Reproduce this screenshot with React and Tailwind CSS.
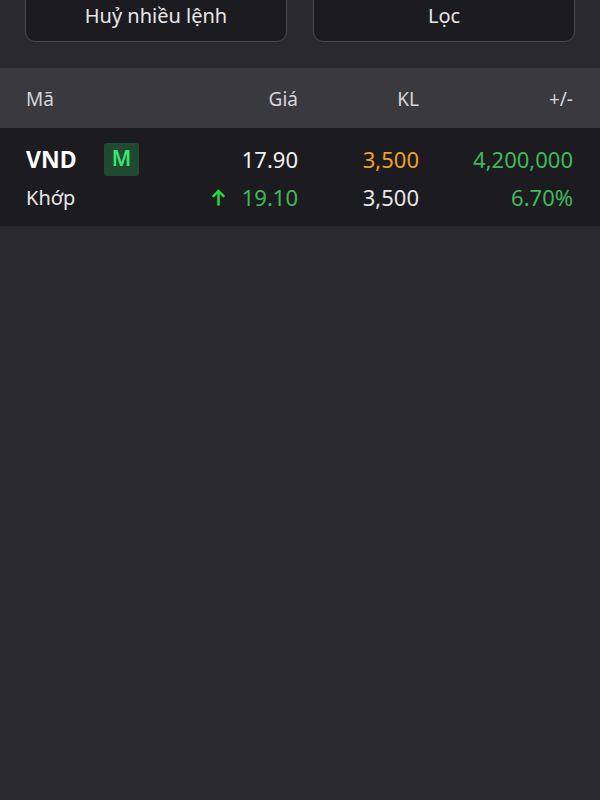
import React from 'react';

const font = { fontFamily: '"Noto Sans", "Liberation Sans", sans-serif' };

const TopButton = ({ label }) => (
  <button
    type="button"
    className="flex h-[55px] flex-1 items-center justify-center rounded-[10px] border border-[#4a494f] bg-[#1c1b20] pt-[2px] text-[20px] text-[#e8e8ea]"
  >
    {label}
  </button>
);

const ArrowUp = () => (
  <svg viewBox="0 0 14 18" className="h-[17px] w-[13px]" fill="none" stroke="#22e03a" strokeWidth="2.6" strokeLinecap="round" strokeLinejoin="round">
    <path d="M7 16.5V2" />
    <path d="M1.5 7.5L7 2l5.5 5.5" />
  </svg>
);

export default function App() {
  return (
    <div className="h-[800px] w-[600px] overflow-hidden bg-[#2a292e]" style={font}>
      {/* action buttons, cut off at the top */}
      <div className="flex h-[68px] px-[25px]">
        <div className="-mt-[13px] flex w-full gap-[26px]">
          <TopButton label="Huỷ nhiều lệnh" />
          <TopButton label="Lọc" />
        </div>
      </div>

      {/* table header */}
      <div className="flex h-[60px] items-center bg-[#3a393e] px-[26px] pr-[27px] pt-[2px] text-[19px] text-[#d6d6d9]">
        <div className="w-[152px]">Mã</div>
        <div className="w-[120px] text-right">Giá</div>
        <div className="w-[121px] text-right">KL</div>
        <div className="flex-1 text-right">+/-</div>
      </div>

      {/* order row */}
      <div className="flex h-[98px] flex-col justify-center gap-[7px] bg-[#1c1b1f] px-[26px] pr-[27px] pt-[1px]">
        <div className="flex h-[33px] items-center text-[22px]">
          <div className="flex w-[152px] items-center">
            <span className="w-[78px] text-[23px] font-bold text-white">VND</span>
            <span className="flex h-[33px] w-[35px] items-center justify-center rounded-[3px] bg-[#1f4a31] text-[21px] font-semibold text-[#3be571]">
              M
            </span>
          </div>
          <div className="w-[120px] text-right text-[#f2f2f2]">17.90</div>
          <div className="w-[121px] text-right text-[#f0a21e]">3,500</div>
          <div className="flex-1 text-right text-[#3dbb5b]">4,200,000</div>
        </div>
        <div className="flex h-[30px] items-center text-[22px]">
          <div className="w-[152px] text-[20px] text-[#e6e6e8]">Khớp</div>
          <div className="flex w-[120px] items-center justify-end gap-[17px] text-[#3dbb5b]">
            <ArrowUp />
            <span>19.10</span>
          </div>
          <div className="w-[121px] text-right text-[#e6e6e8]">3,500</div>
          <div className="flex-1 text-right text-[#3dbb5b]">6.70%</div>
        </div>
      </div>
    </div>
  );
}
